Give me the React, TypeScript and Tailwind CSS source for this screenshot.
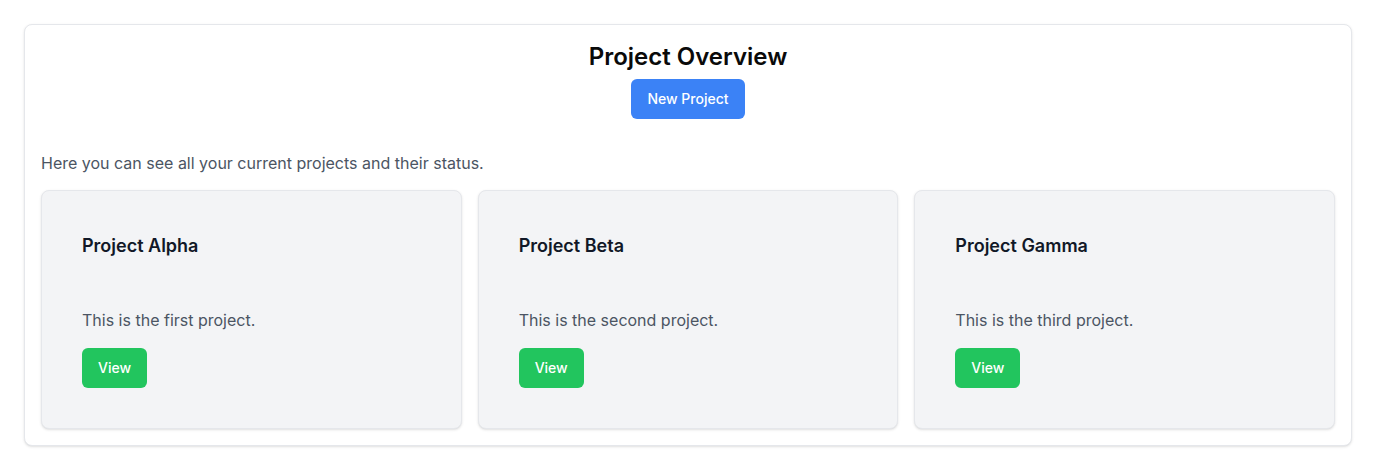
const projects = [
  { name: 'Project Alpha', description: 'This is the first project.' },
  { name: 'Project Beta', description: 'This is the second project.' },
  { name: 'Project Gamma', description: 'This is the third project.' },
];

function ProjectCard({ name, description }: { name: string; description: string }) {
  return (
    <div className="rounded-lg border border-[#e5e7eb] bg-[#f3f4f6] px-10 pt-[41px] pb-10 shadow-sm">
      <h2 className="mb-12 text-lg leading-7 font-semibold text-[#111827]">{name}</h2>
      <p className="mb-4 text-base leading-6 text-[#4b5563]">{description}</p>
      <button className="rounded-md bg-[#22c55e] px-4 py-2.5 text-sm leading-5 font-medium text-white">
        View
      </button>
    </div>
  );
}

export default function App() {
  return (
    <div className="min-h-screen bg-white p-6 font-['Inter',sans-serif]">
      <div className="rounded-lg border border-[#e5e7eb] bg-white p-4 shadow-sm">
        <div className="flex flex-col items-center">
          <h1 className="text-2xl leading-8 font-semibold text-[#0a0a0a]">Project Overview</h1>
          <button className="mt-1.5 rounded-md bg-[#3b82f6] px-4 py-2.5 text-sm leading-5 font-medium text-white">
            New Project
          </button>
        </div>
        <p className="mt-8 mb-[15px] text-base leading-6 text-[#4b5563]">
          Here you can see all your current projects and their status.
        </p>
        <div className="grid grid-cols-3 gap-4">
          {projects.map((p) => (
            <ProjectCard key={p.name} {...p} />
          ))}
        </div>
      </div>
    </div>
  );
}
